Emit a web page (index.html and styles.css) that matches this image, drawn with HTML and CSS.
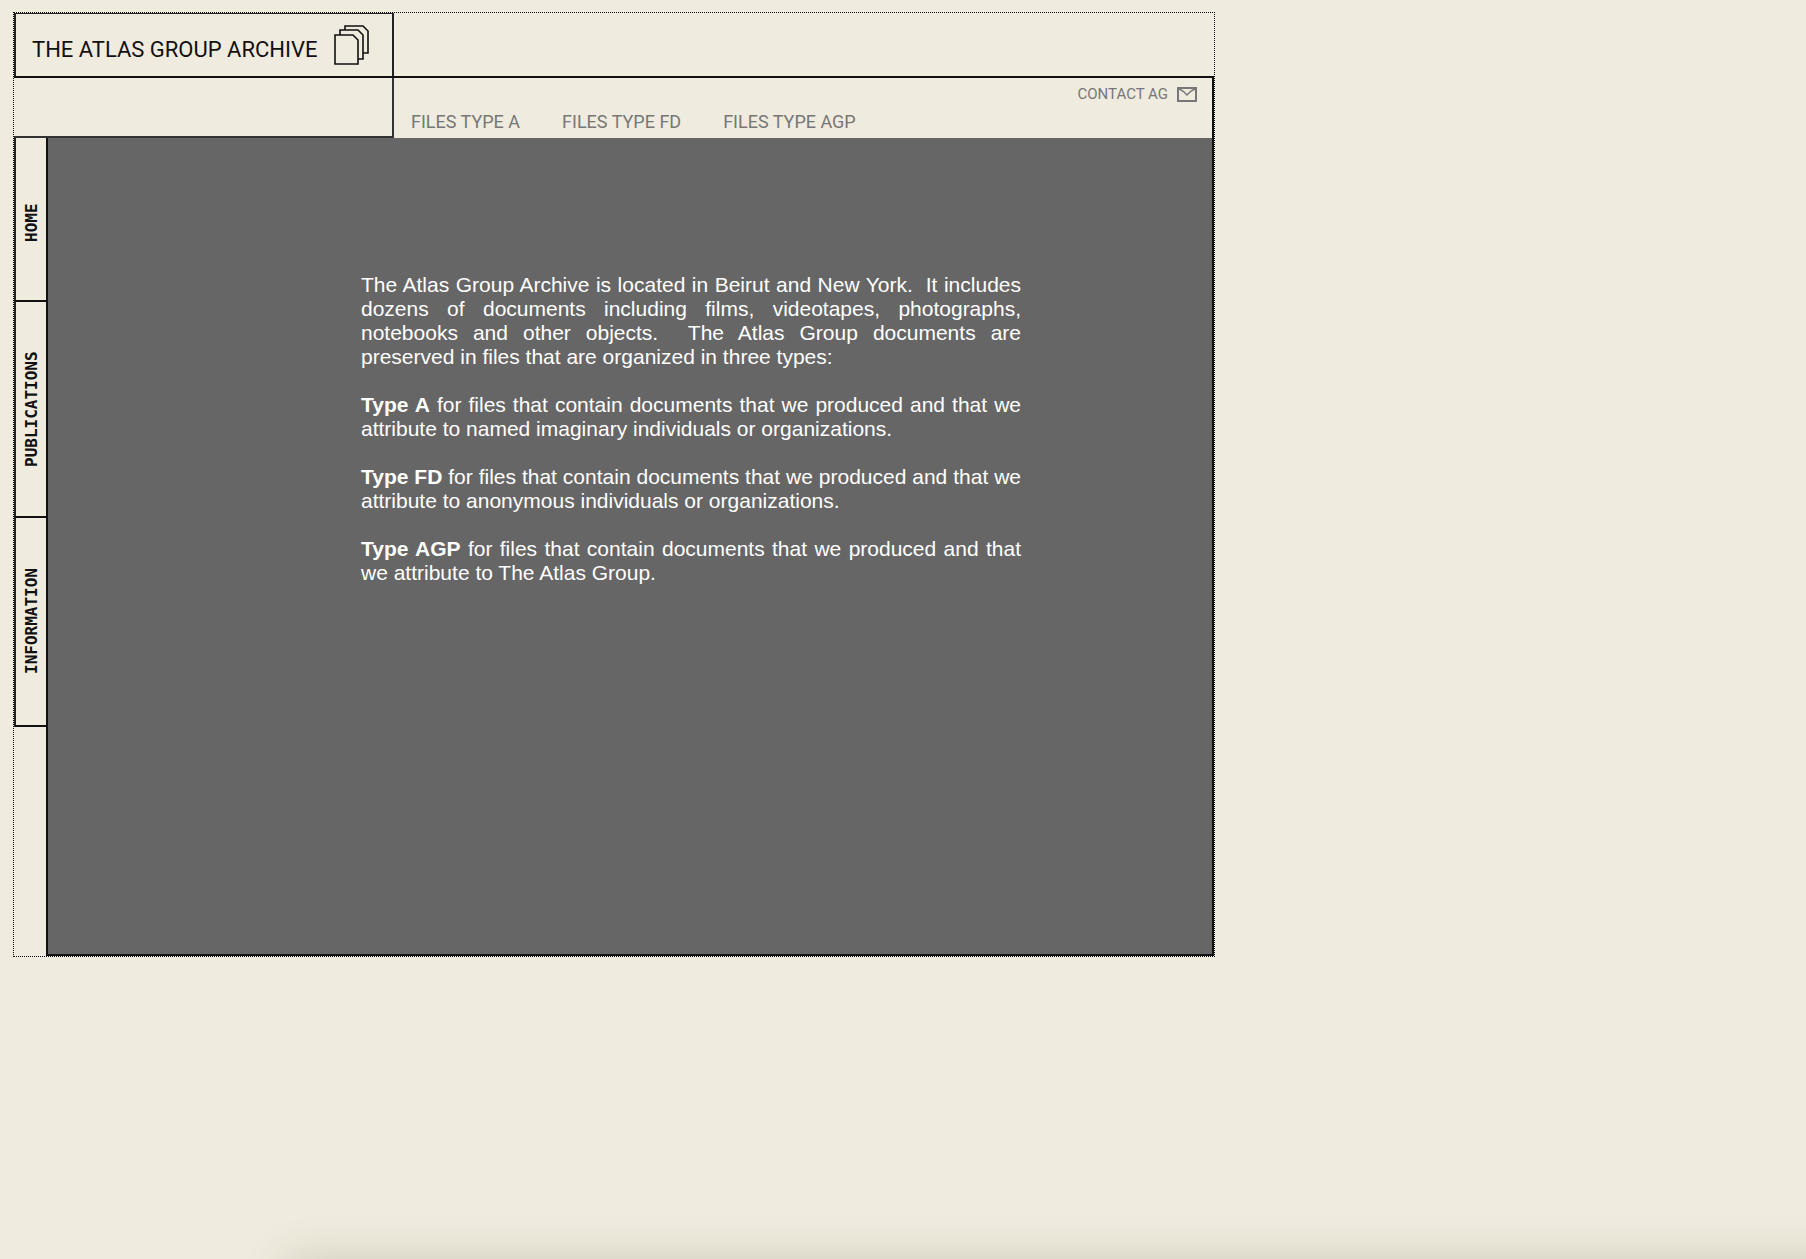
FILE: index.html
```html
<!DOCTYPE html>
<html lang="en">
<head>
  <meta charset="UTF-8">
  <meta name="viewport" content="width=device-width, initial-scale=1.0">
  <title>The Atlas Group Archive</title>
  <link rel="stylesheet" href="styles.css">
</head>
<body>

  <div class="site">
    <header class="header">
      <a href="#" class="logo">
        <span>THE ATLAS GROUP ARCHIVE</span>
        <svg width="36" height="42" viewBox="0 0 36 42" fill="none" stroke="#111" stroke-width="1.6">
          <path d="M1 11h18l5 5v24H1z"/>
          <path d="M6 11V6h18l5 5v24h-5"/>
          <path d="M11 6V2h18l5 5v22h-5"/>
        </svg>
      </a>
    </header>

    <div class="subheader">
      <div class="spacer"></div>
      <nav class="files">
        <a href="#">FILES TYPE A</a>
        <a href="#">FILES TYPE FD</a>
        <a href="#">FILES TYPE AGP</a>
      </nav>
      <a href="#" class="contact">
        <span>CONTACT AG</span>
        <svg width="20" height="15" viewBox="0 0 20 15" fill="none" stroke="#777" stroke-width="2">
          <path d="M1 1h18v13H1z"/>
          <path d="M2 2l4 2 4 4 4-4 4-2" stroke-width="1.5"/>
        </svg>
      </a>
    </div>

    <div class="content">
      <nav class="sidebar">
        <a href="#" class="home">HOME</a>
        <a href="#" class="publications">PUBLICATIONS</a>
        <a href="#" class="information">INFORMATION</a>
      </nav>

      <main class="main">
        <div class="text">
          <p>The Atlas Group Archive is located in Beirut and New York.&nbsp; It includes dozens of documents including films, videotapes, photographs, notebooks and other objects.&nbsp; The Atlas Group documents are preserved in files that are organized in three types:</p>
          <p><strong>Type A</strong> for files that contain documents that we produced and that we attribute to named imaginary individuals or organizations.</p>
          <p><strong>Type FD</strong> for files that contain documents that we produced and that we attribute to anonymous individuals or organizations.</p>
          <p><strong>Type AGP</strong> for files that contain documents that we produced and that we attribute to The Atlas Group.</p>
        </div>
      </main>
    </div>
  </div>

  <div class="bottom-shadow"></div>

</body>
</html>
```
FILE: styles.css
```css
* {
  box-sizing: border-box;
}

body {
  margin: 0;
  padding: 12px 13px;
  background-color: #efebde;
  font-family: "Liberation Sans", Arial, sans-serif;
}

a {
  color: inherit;
  text-decoration: none;
}

.site {
  max-width: 1202px;
  border: 1px dotted #000;
}

/* top bar */
.header {
  display: flex;
  height: 65px;
  border-bottom: 2px solid #111;
}

.logo {
  display: flex;
  align-items: center;
  justify-content: space-between;
  width: 380px;
  padding: 0 22px 0 16px;
  border: 2px solid #222;
  border-top-width: 1px;
  border-bottom: none;
  font-family: Roboto, sans-serif;
  font-size: 22px;
  color: #111;
}

.logo span {
  padding-top: 8px;
}

.subheader {
  display: flex;
  height: 60px;
  border-right: 2px solid #111;
}

.spacer {
  width: 380px;
  border-right: 2px solid #333;
  border-bottom: 2px solid #333;
}

.files {
  display: flex;
  align-items: flex-end;
  gap: 42px;
  flex: 1;
  padding: 0 0 5px 17px;
  font-family: Roboto, sans-serif;
  font-size: 18px;
  line-height: 22px;
  color: #777;
}

.contact {
  display: flex;
  align-items: center;
  align-self: flex-start;
  gap: 9px;
  padding: 8px 15px 0 0;
  font-family: Roboto, sans-serif;
  font-size: 15px;
  line-height: 16px;
  color: #777;
}

/* left menu and text */
.content {
  display: flex;
  min-height: 818px;
}

.sidebar {
  width: 32px;
}

.sidebar a {
  display: flex;
  align-items: center;
  justify-content: center;
  width: 32px;
  border-right: 2px solid #222;
  border-top: 2px solid #111;
  font-family: "DejaVu Sans Mono", monospace;
  font-size: 16px;
  font-weight: bold;
  color: #111;
  writing-mode: vertical-rl;
  transform: rotate(180deg);
}

.sidebar .home {
  height: 164px;
  padding-bottom: 8px;
}

.publications {
  height: 216px;
}

.information {
  height: 209px;
}

.main {
  flex: 1;
  padding: 135px 191px 40px 313px;
  border: 2px solid #111;
  border-top: none;
  background-color: #666;
}

.text {
  color: #fff;
  font-size: 21px;
  line-height: 24px;
  text-align: justify;
}

.text p {
  margin: 0 0 24px;
}

.bottom-shadow {
  position: fixed;
  top: 100%;
  left: 286px;
  right: -60px;
  height: 100px;
  box-shadow: 0 0 44px rgba(60, 60, 30, 0.18);
}
```
